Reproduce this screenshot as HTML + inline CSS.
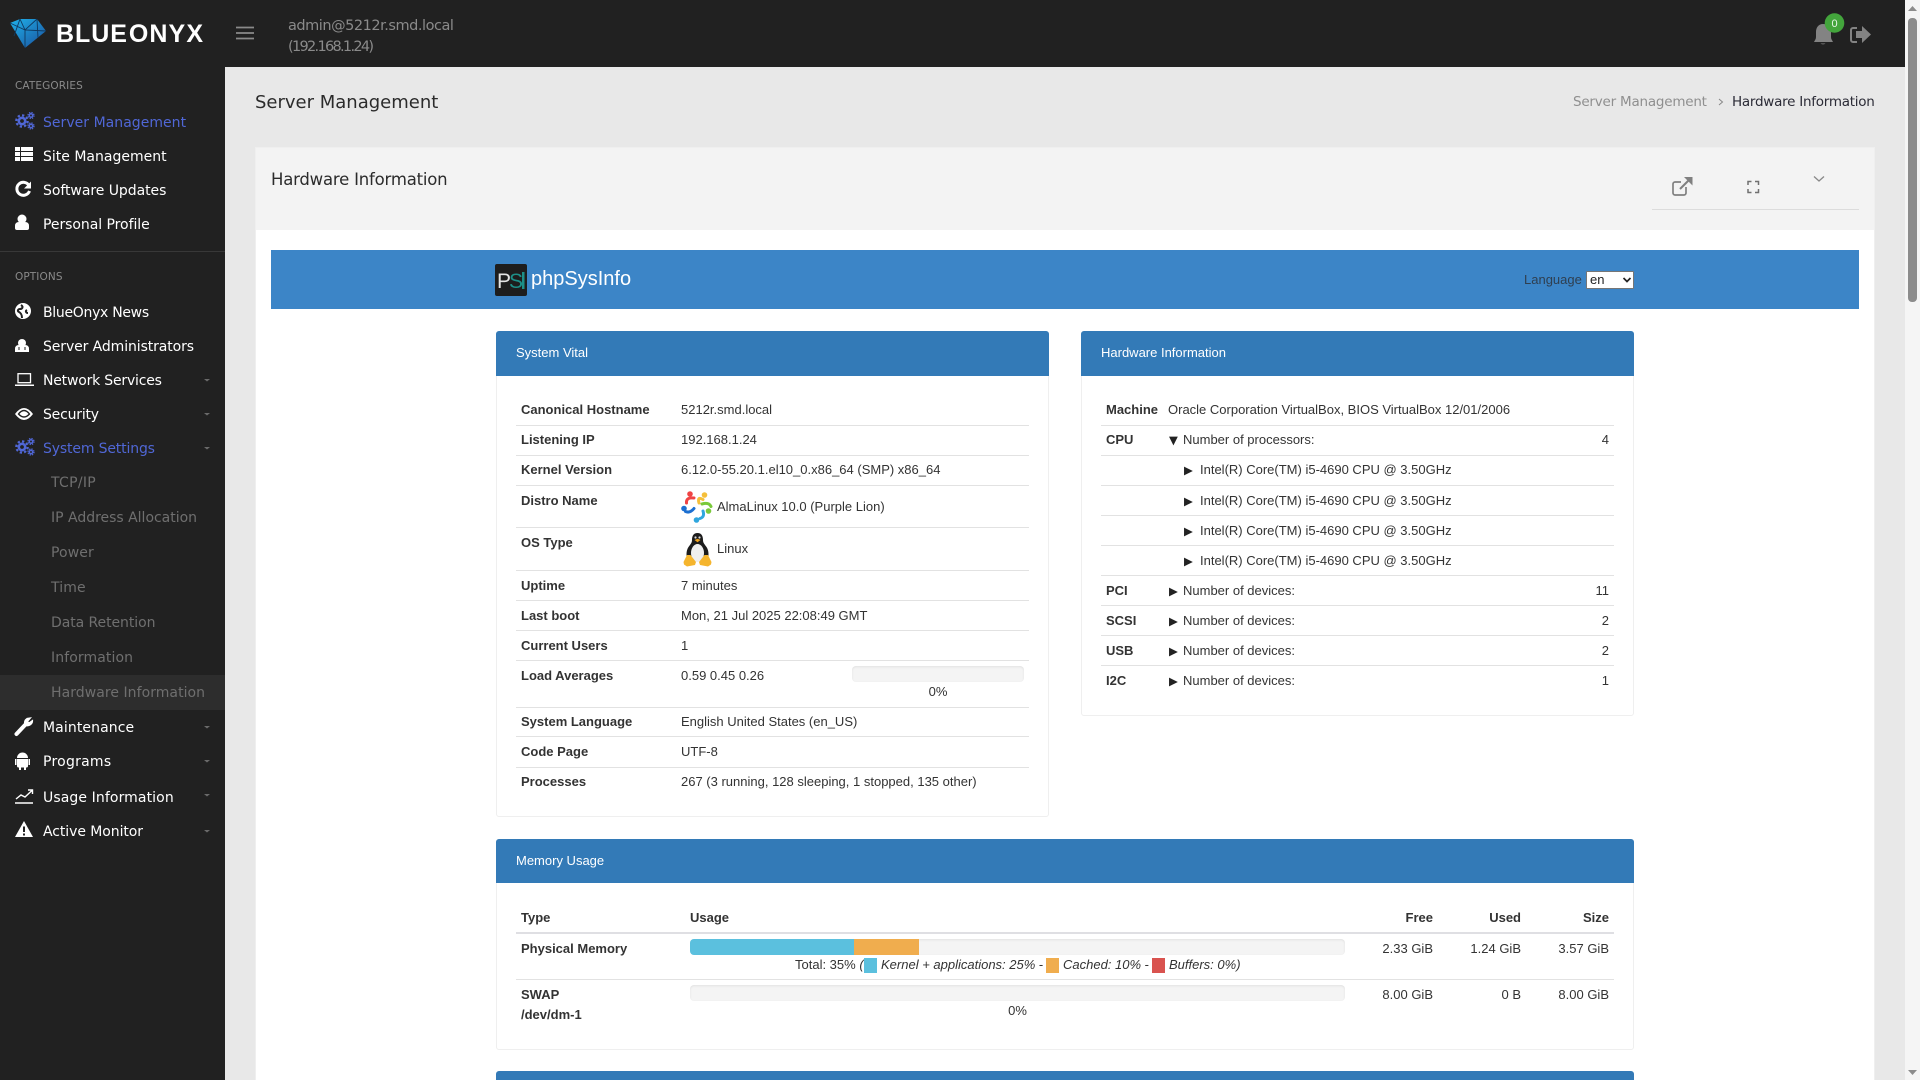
<!DOCTYPE html>
<html lang="en"><head><meta charset="utf-8"><title>Hardware Information</title>
<style>
html,body{margin:0;padding:0;width:1920px;height:1080px;overflow:hidden;background:#e8e8e8}
body{position:relative;font-family:"Liberation Sans",Arial,sans-serif;font-size:13px;color:#333}
.a{position:absolute;white-space:nowrap;line-height:20px}
.b{position:absolute}
.p{font-family:"DejaVu Sans","Liberation Sans",sans-serif}
.n{font-size:14px;color:#fff;left:43px;letter-spacing:.1px}
.act{color:#5067d6}
.s{font-size:14px;color:#6f6f6f;left:51px;letter-spacing:.1px}
.cat{font-size:10.5px;color:#8a8a8a;left:15px;letter-spacing:.1px}
.l{font-weight:bold;left:521px}
.v{left:681px}
.r{left:1106px;font-weight:bold}
.hl{position:absolute;height:1px;background:#e2e2e2}
.ar{position:absolute;text-align:right;white-space:nowrap;line-height:20px}
.ph{position:absolute;background:#337ab7;border-radius:3px 3px 0 0}
.pn{position:absolute;background:#fff;border:1px solid #efefef;border-radius:3px;box-sizing:border-box}
.ti{color:#fff;left:516px}
.tr{font-size:11.5px;font-family:"DejaVu Sans",sans-serif;color:#222}
.bar{position:absolute;background:#f4f4f4;border-radius:4px;box-shadow:inset 0 1px 2px rgba(0,0,0,.08)}
</style></head><body>
<!-- layout blocks -->
<div class="b" style="left:0;top:0;width:1905px;height:67px;background:#212121"></div>
<div class="b" style="left:0;top:67px;width:225px;height:1013px;background:#212121"></div>
<div class="b" style="left:0;top:251px;width:225px;height:1px;background:#383838"></div>
<div class="b" style="left:0;top:675px;width:225px;height:35px;background:#2d2d2d"></div>
<div class="b" style="left:1905px;top:0;width:15px;height:1080px;background:#f5f5f5"></div>
<div class="b" style="left:1908px;top:18px;width:9px;height:284px;background:#8c8c8c;border-radius:4px"></div>

<!-- card -->
<div class="b" style="left:256px;top:148px;width:1618px;height:932px;background:#fff;box-shadow:0 0 0 1px #efefef"></div>
<div class="b" style="left:256px;top:148px;width:1618px;height:82px;background:#f3f3f3"></div>
<div class="b" style="left:1652px;top:209px;width:207px;height:1px;background:#dcdcdc"></div>
<div class="b" style="left:271px;top:250px;width:1588px;height:59px;background:#3c85c7"></div>

<!-- header text -->
<div class="a" style="left:56px;top:17px;line-height:34px;font-size:25px;font-weight:bold;color:#fff;letter-spacing:.95px;font-family:'Liberation Sans',sans-serif">BLUE<span style="margin-left:1px;letter-spacing:1.1px">ONYX</span></div>
<div class="a p" style="left:288px;top:16px;font-size:14.5px;color:#8a8a8a;letter-spacing:-.47px">admin@5212r.smd.local</div>
<div class="a p" style="left:288px;top:37px;font-size:14.5px;color:#8a8a8a;letter-spacing:-1.7px">(192.168.1.24)</div>

<!-- sidebar -->
<div class="a p cat" style="top:76px">CATEGORIES</div>
<div class="a p n act" style="top:113px;letter-spacing:.03px">Server Management</div>
<div class="a p n" style="top:147px;letter-spacing:0">Site Management</div>
<div class="a p n" style="top:181px;letter-spacing:-.05px">Software Updates</div>
<div class="a p n" style="top:215px;letter-spacing:-.05px">Personal Profile</div>
<div class="a p cat" style="top:267px">OPTIONS</div>
<div class="a p n" style="top:303px;letter-spacing:-.3px">BlueOnyx News</div>
<div class="a p n" style="top:337px;letter-spacing:-.1px">Server Administrators</div>
<div class="a p n" style="top:371px;letter-spacing:-.2px">Network Services</div>
<div class="a p n" style="top:405px;letter-spacing:-.2px">Security</div>
<div class="a p n act" style="top:439px;letter-spacing:-.15px">System Settings</div>
<div class="a p s" style="top:473px;letter-spacing:.3px">TCP/IP</div>
<div class="a p s" style="top:508px;letter-spacing:-.01px">IP Address Allocation</div>
<div class="a p s" style="top:543px">Power</div>
<div class="a p s" style="top:578px">Time</div>
<div class="a p s" style="top:613px;letter-spacing:-.07px">Data Retention</div>
<div class="a p s" style="top:648px">Information</div>
<div class="a p s" style="top:683px;letter-spacing:.05px">Hardware Information</div>
<div class="a p n" style="top:718px">Maintenance</div>
<div class="a p n" style="top:752px;letter-spacing:.25px">Programs</div>
<div class="a p n" style="top:788px">Usage Information</div>
<div class="a p n" style="top:822px;letter-spacing:-.07px">Active Monitor</div>

<!-- page title -->
<div class="a p" style="left:255px;top:93px;font-size:18px;color:#2b2b2b">Server Management</div>
<div class="a p" style="left:1573px;top:92px;font-size:13.5px;color:#8f8f8f;letter-spacing:-.22px">Server Management</div>
<div class="a p" style="left:1732px;top:92px;font-size:13.5px;color:#2b2b36;letter-spacing:-.25px">Hardware Information</div>
<div class="a p" style="left:271px;top:170px;font-size:16.5px;color:#2b2b2b;letter-spacing:-.2px">Hardware Information</div>

<!-- banner -->
<div class="a" style="left:531px;top:269px;font-size:20px;color:#fff">phpSysInfo</div>
<div class="a" style="left:1524px;top:270px;font-size:13px;color:#2f3f50">Language</div>
<div class="b" style="left:1586px;top:271px;width:48px;height:18px;background:#fff;border:1px solid #767676;box-sizing:border-box;border-radius:1px"></div>
<div class="a" style="left:1590px;top:270px;font-size:13px;color:#222">en</div>

<!-- system vital -->
<div class="pn" style="left:496px;top:331px;width:553px;height:486px"></div>
<div class="ph" style="left:496px;top:331px;width:553px;height:45px"></div>
<div class="a ti" style="top:343px">System Vital</div>
<div class="hl" style="left:516px;top:425px;width:513px"></div>
<div class="hl" style="left:516px;top:455px;width:513px"></div>
<div class="hl" style="left:516px;top:485px;width:513px"></div>
<div class="hl" style="left:516px;top:527px;width:513px"></div>
<div class="hl" style="left:516px;top:570px;width:513px"></div>
<div class="hl" style="left:516px;top:600px;width:513px"></div>
<div class="hl" style="left:516px;top:630px;width:513px"></div>
<div class="hl" style="left:516px;top:660px;width:513px"></div>
<div class="hl" style="left:516px;top:707px;width:513px"></div>
<div class="hl" style="left:516px;top:736px;width:513px"></div>
<div class="hl" style="left:516px;top:767px;width:513px"></div>
<div class="a l" style="top:400px">Canonical Hostname</div><div class="a v" style="top:400px">5212r.smd.local</div>
<div class="a l" style="top:430px">Listening IP</div><div class="a v" style="top:430px">192.168.1.24</div>
<div class="a l" style="top:460px">Kernel Version</div><div class="a v" style="top:460px">6.12.0-55.20.1.el10_0.x86_64 (SMP) x86_64</div>
<div class="a l" style="top:491px">Distro Name</div><div class="a" style="left:717px;top:497px">AlmaLinux 10.0 (Purple Lion)</div>
<div class="a l" style="top:533px">OS Type</div><div class="a" style="left:717px;top:539px">Linux</div>
<div class="a l" style="top:576px">Uptime</div><div class="a v" style="top:576px">7 minutes</div>
<div class="a l" style="top:606px">Last boot</div><div class="a v" style="top:606px">Mon, 21 Jul 2025 22:08:49 GMT</div>
<div class="a l" style="top:636px">Current Users</div><div class="a v" style="top:636px">1</div>
<div class="a l" style="top:666px">Load Averages</div><div class="a v" style="top:666px">0.59 0.45 0.26</div>
<div class="bar" style="left:852px;top:666px;width:172px;height:16px"></div>
<div class="a" style="left:852px;width:172px;text-align:center;top:682px">0%</div>
<div class="a l" style="top:712px">System Language</div><div class="a v" style="top:712px">English United States (en_US)</div>
<div class="a l" style="top:742px">Code Page</div><div class="a v" style="top:742px">UTF-8</div>
<div class="a l" style="top:772px">Processes</div><div class="a v" style="top:772px">267 (3 running, 128 sleeping, 1 stopped, 135 other)</div>

<!-- hardware -->
<div class="pn" style="left:1081px;top:331px;width:553px;height:385px"></div>
<div class="ph" style="left:1081px;top:331px;width:553px;height:45px"></div>
<div class="a" style="left:1101px;top:343px;color:#fff">Hardware Information</div>
<div class="hl" style="left:1101px;top:425px;width:513px"></div>
<div class="hl" style="left:1101px;top:455px;width:513px"></div>
<div class="hl" style="left:1101px;top:485px;width:513px"></div>
<div class="hl" style="left:1101px;top:515px;width:513px"></div>
<div class="hl" style="left:1101px;top:545px;width:513px"></div>
<div class="hl" style="left:1101px;top:575px;width:513px"></div>
<div class="hl" style="left:1101px;top:605px;width:513px"></div>
<div class="hl" style="left:1101px;top:635px;width:513px"></div>
<div class="hl" style="left:1101px;top:665px;width:513px"></div>
<div class="a r" style="top:400px">Machine</div><div class="a" style="left:1168px;top:400px">Oracle Corporation VirtualBox, BIOS VirtualBox 12/01/2006</div>
<div class="a r" style="top:430px">CPU</div><div class="a" style="left:1183px;top:430px">Number of processors:</div><div class="ar" style="right:311px;top:430px">4</div>
<div class="a" style="left:1200px;top:460px">Intel(R) Core(TM) i5-4690 CPU @ 3.50GHz</div>
<div class="a" style="left:1200px;top:491px">Intel(R) Core(TM) i5-4690 CPU @ 3.50GHz</div>
<div class="a" style="left:1200px;top:521px">Intel(R) Core(TM) i5-4690 CPU @ 3.50GHz</div>
<div class="a" style="left:1200px;top:551px">Intel(R) Core(TM) i5-4690 CPU @ 3.50GHz</div>
<div class="a r" style="top:581px">PCI</div><div class="a" style="left:1183px;top:581px">Number of devices:</div><div class="ar" style="right:311px;top:581px">11</div>
<div class="a r" style="top:611px">SCSI</div><div class="a" style="left:1183px;top:611px">Number of devices:</div><div class="ar" style="right:311px;top:611px">2</div>
<div class="a r" style="top:641px">USB</div><div class="a" style="left:1183px;top:641px">Number of devices:</div><div class="ar" style="right:311px;top:641px">2</div>
<div class="a r" style="top:671px">I2C</div><div class="a" style="left:1183px;top:671px">Number of devices:</div><div class="ar" style="right:311px;top:671px">1</div>

<!-- memory -->
<div class="pn" style="left:496px;top:839px;width:1138px;height:211px"></div>
<div class="ph" style="left:496px;top:839px;width:1138px;height:44px"></div>
<div class="a ti" style="top:851px">Memory Usage</div>
<div class="a l" style="top:908px">Type</div>
<div class="a l" style="left:690px;top:908px">Usage</div>
<div class="ar" style="right:487px;top:908px;font-weight:bold">Free</div>
<div class="ar" style="right:399px;top:908px;font-weight:bold">Used</div>
<div class="ar" style="right:311px;top:908px;font-weight:bold">Size</div>
<div class="hl" style="left:516px;top:932px;width:1098px;height:2px;background:#dfdfe3"></div>
<div class="a l" style="top:939px">Physical Memory</div>
<div class="bar" style="left:690px;top:939px;width:655px;height:16px"></div>
<div class="b" style="left:690px;top:939px;width:164px;height:16px;background:#5bc0de;border-radius:4px 0 0 4px"></div>
<div class="b" style="left:854px;top:939px;width:65px;height:16px;background:#f0ad4e"></div>
<div class="ar" style="right:487px;top:939px">2.33 GiB</div>
<div class="ar" style="right:399px;top:939px">1.24 GiB</div>
<div class="ar" style="right:311px;top:939px">3.57 GiB</div>
<div class="a" style="left:795px;top:955px">Total: 35% <i>(</i></div>
<div class="b" style="left:864px;top:958px;width:13px;height:15px;background:#5bc0de"></div>
<div class="a" style="left:881px;top:955px"><i>Kernel + applications: 25%</i> -</div>
<div class="b" style="left:1046px;top:958px;width:13px;height:15px;background:#f0ad4e"></div>
<div class="a" style="left:1063px;top:955px"><i>Cached: 10%</i> -</div>
<div class="b" style="left:1152px;top:958px;width:13px;height:15px;background:#d9534f"></div>
<div class="a" style="left:1169px;top:955px"><i>Buffers: 0%)</i></div>
<div class="hl" style="left:516px;top:979px;width:1098px"></div>
<div class="a l" style="top:985px">SWAP</div>
<div class="a l" style="top:1005px">/dev/dm-1</div>
<div class="bar" style="left:690px;top:985px;width:655px;height:16px"></div>
<div class="a" style="left:690px;width:655px;text-align:center;top:1001px">0%</div>
<div class="ar" style="right:487px;top:985px">8.00 GiB</div>
<div class="ar" style="right:399px;top:985px">0 B</div>
<div class="ar" style="right:311px;top:985px">8.00 GiB</div>
<div class="ph" style="left:496px;top:1071px;width:1138px;height:9px"></div>

<!-- icons -->
<svg class="b" style="left:0;top:0" width="1920" height="1080" viewBox="0 0 1920 1080">
<defs><linearGradient id="d" x1="0" y1="0" x2="1" y2="1"><stop offset="0" stop-color="#1fb2ea"/><stop offset="1" stop-color="#1a4f9c"/></linearGradient>
<g id="gears" fill="none" stroke="#5067d6"><circle cx="22" cy="121" r="3.2" stroke-width="2.6"/><circle cx="22" cy="121" r="5.7" stroke-width="2.2" stroke-dasharray="2.3 2.15"/><circle cx="31" cy="115.500" r="1.700" stroke-width="1.500"/><circle cx="31" cy="115.500" r="3" stroke-width="1.300" stroke-dasharray="1.300 1.060"/><circle cx="31" cy="126" r="1.700" stroke-width="1.500"/><circle cx="31" cy="126" r="3" stroke-width="1.300" stroke-dasharray="1.300 1.060"/></g></defs>
<!-- logo -->
<polygon points="10,23 20,19 37,19 46,31 25,48" fill="url(#d)"/>
<path d="M10 23 L25 30 L37 19 M20 19 L25 30 L46 31 M25 30 L25 48 M20 19 L14 36 M37 19 L38 38" stroke="#10385f" stroke-width=".9" fill="none"/>
<!-- hamburger -->
<path d="M236 27.500H254M236 33H254M236 38.500H254" stroke="#8a8a8a" stroke-width="1.800"/>
<!-- bell -->
<path d="M1823 24c-4.500 0-7 3.500-7 8v5c0 2-1 3-2 5h19c-1-2-2-3-2-5v-5c0-4.500-3-8-8-8z" fill="#838383"/><path d="M1820.500 43.500a3 2 0 0 0 5 0z" fill="#838383"/>
<circle cx="1834.500" cy="23" r="9.800" fill="#43a53c"/>
<text x="1834.500" y="27" text-anchor="middle" font-size="11" font-family="Liberation Sans" fill="#e8f5e8">0</text>
<!-- logout -->
<path d="M1857 28h-4a2 2 0 0 0-2 2v10a2 2 0 0 0 2 2h4" fill="none" stroke="#838383" stroke-width="2"/><path d="M1856 31h6v-5l9 8.500-9 8.500v-5h-6z" fill="#838383"/>
<!-- sidebar icons -->
<use href="#gears"/>
<use href="#gears" y="326"/>
<g fill="#fff">
<path d="M15 147h5v4h-5zM21 147h12v4H21zM15 152h5v4h-5zM21 152h12v4H21zM15 157h5v4h-5zM21 157h12v4H21z"/>
<circle cx="22" cy="219" r="4.500"/><path d="M15 228v-2q0-4 4-4h6q4 0 4 4v2q0 2-2 2H17q-2 0-2-2z"/>
<circle cx="23" cy="311" r="8"/>
<circle cx="22" cy="343" r="4"/><path d="M15 352v-3q0-4 4-4h6q4 0 4 4v3z"/>
<path d="M15 414Q24 402 33 414Q24 426 15 414z"/>
<polygon points="24,821 33,837 15,837"/>
<path d="M17 758a5.500 5.500 0 0 1 11 0zM17 759h11v7a1.500 1.500 0 0 1-1.500 1.500h-8A1.500 1.500 0 0 1 17 766zM15 759h1.500v6H15zM28.500 759H30v6h-1.500zM19 767h2v3h-2zM24 767h2v3h-2z"/>
</g>
<path d="M29 185.500A6.500 6.500 0 1 0 29.500 191" fill="none" stroke="#fff" stroke-width="3"/><polygon points="31,181.500 31,188.500 24,188.500" fill="#fff"/>
<path d="M21 305c3 2 1 4-1 4s-3 2-1 3 3 3 3 6M27 310c-2 1-1 3 1 3" fill="none" stroke="#212121" stroke-width="2"/>
<path d="M19 347v3M25 347v3" stroke="#212121" stroke-width="1"/>
<rect x="18" y="373.700" width="12.500" height="9" fill="none" stroke="#fff" stroke-width="1.300"/><path d="M15 385.300H34" stroke="#fff" stroke-width="1.500"/>
<path d="M18.500 414Q24 407 29.500 414Q24 420 18.500 414z" fill="none" stroke="#212121" stroke-width="1.400"/>
<path d="M16.500 734L25 725" stroke="#fff" stroke-width="4" stroke-linecap="round"/><path d="M25 725a5 5 0 0 1 2-6.500l3.500-.5-3 3.500 1.500 1.500 3.500-2.500a5 5 0 0 1-6.500 5z" fill="#fff" stroke="#fff" stroke-width="1.200"/>
<path d="M15 803H33" stroke="#fff" stroke-width="1.400"/><path d="M16 799L21 795L25 797L32 790.500M28 790H32.500V794" fill="none" stroke="#fff" stroke-width="1.400"/>
<path d="M24 826.500V832M24 833.500V835.500" stroke="#212121" stroke-width="2"/>
<g fill="#6a6a6a"><polygon points="204,379 210,379 207,381.500"/><polygon points="204,413 210,413 207,415.500"/><polygon points="204,447 210,447 207,449.500"/><polygon points="204,726 210,726 207,728.500"/><polygon points="204,760 210,760 207,762.500"/><polygon points="204,794 210,794 207,796.500"/><polygon points="204,830 210,830 207,832.500"/></g>
<!-- breadcrumb chevron -->
<path d="M1719 99l3.500 3-3.500 3" fill="none" stroke="#888" stroke-width="1"/>
<!-- card tools -->
<path d="M1686 187v6a2 2 0 0 1-2 2h-9a2 2 0 0 1-2-2v-9a2 2 0 0 1 2-2h6" fill="none" stroke="#808080" stroke-width="1.700"/>
<path d="M1680 189L1690 179" stroke="#808080" stroke-width="2"/><polygon points="1684,177 1692.500,177 1692.500,185.500" fill="#808080"/>
<path d="M1748 185v-3.500h3.500M1755 181.500h3.500v3.500M1758.500 189v3.500H1755M1751.500 192.500H1748V189" fill="none" stroke="#707070" stroke-width="1.500"/>
<path d="M1814 176.500l5 4.500 5-4.500" fill="none" stroke="#888" stroke-width="1.300"/>
<!-- select chevron -->
<path d="M1623.500 278l3.500 3.500 3.500-3.500" fill="none" stroke="#222" stroke-width="1.700"/>
<!-- scrollbar arrows -->
<polygon points="1912.500,6 1917,11 1908,11" fill="#8c8c8c"/><polygon points="1908,1070 1917,1070 1912.500,1075" fill="#8c8c8c"/>
<!-- psi logo -->
<rect x="495" y="264" width="32" height="32" rx="2" fill="#1d1d1d"/>
<text x="497" y="288" font-size="21" font-family="Liberation Sans" fill="#e4e4e4">P</text>
<text x="509" y="288" font-size="21" font-family="Liberation Sans" fill="#1d8f88">S</text>
<rect x="522" y="272" width="2.500" height="17" fill="#1d8f88"/>
<!-- alma logo -->
<g fill="none" stroke-width="3" stroke-linecap="round">
<path d="M694 498Q686 497 686.500 503" stroke="#ef4444"/><circle cx="690" cy="494" r="2.800" fill="#ef4444" stroke="none"/>
<path d="M699 503Q697 496 703 499.500" stroke="#f5bf3a"/><circle cx="704.500" cy="495" r="2.800" fill="#f5bf3a" stroke="none"/>
<path d="M702 504Q709 502 711 506.500" stroke="#7ac93b"/><circle cx="708.500" cy="511" r="2.800" fill="#7ac93b" stroke="none"/>
<path d="M703 511Q705 517 700 518.500" stroke="#2fa6de"/><circle cx="696.500" cy="520" r="2.800" fill="#2fa6de" stroke="none"/>
<path d="M694 508.500Q690 513.500 685.500 511.500" stroke="#1c6fd1"/><circle cx="684" cy="508.500" r="2.800" fill="#1c6fd1" stroke="none"/>
</g>
<!-- tux -->
<path d="M697.500 533c-4 0-5.500 3-5.500 7 0 3-1.500 4-3.500 7-2 3-2.500 7-1.500 12h21c1-5 .5-9-1.500-12-2-3-3.500-4-3.500-7 0-4-1.500-7-5.500-7z" fill="#1c1c1c"/>
<path d="M697.500 544c-3.500 0-6.500 4-6.500 9 0 5 2.500 9 6.500 9s6.500-4 6.500-9c0-5-3-9-6.500-9z" fill="#efefef"/>
<circle cx="695.500" cy="537.500" r="1.100" fill="#ddd"/><circle cx="699.500" cy="537.500" r="1.100" fill="#ddd"/>
<path d="M694.500 540l3-1.200 3 1.200-3 2.200z" fill="#eda21f"/>
<path d="M683.500 562l3.500-7 3.500 0 5.500 7-1 3-8 1.500-3-2zM711.500 562l-3.500-7-3.500 0-5.500 7 1 3 8 1.500 3-2z" fill="#f5b52e"/>
</svg>
<!-- tree arrows -->
<div class="a tr" style="left:1169px;top:430px">▼</div>
<div class="a tr" style="left:1184px;top:460px">▶</div>
<div class="a tr" style="left:1184px;top:491px">▶</div>
<div class="a tr" style="left:1184px;top:521px">▶</div>
<div class="a tr" style="left:1184px;top:551px">▶</div>
<div class="a tr" style="left:1169px;top:581px">▶</div>
<div class="a tr" style="left:1169px;top:611px">▶</div>
<div class="a tr" style="left:1169px;top:641px">▶</div>
<div class="a tr" style="left:1169px;top:671px">▶</div>
</body></html>
